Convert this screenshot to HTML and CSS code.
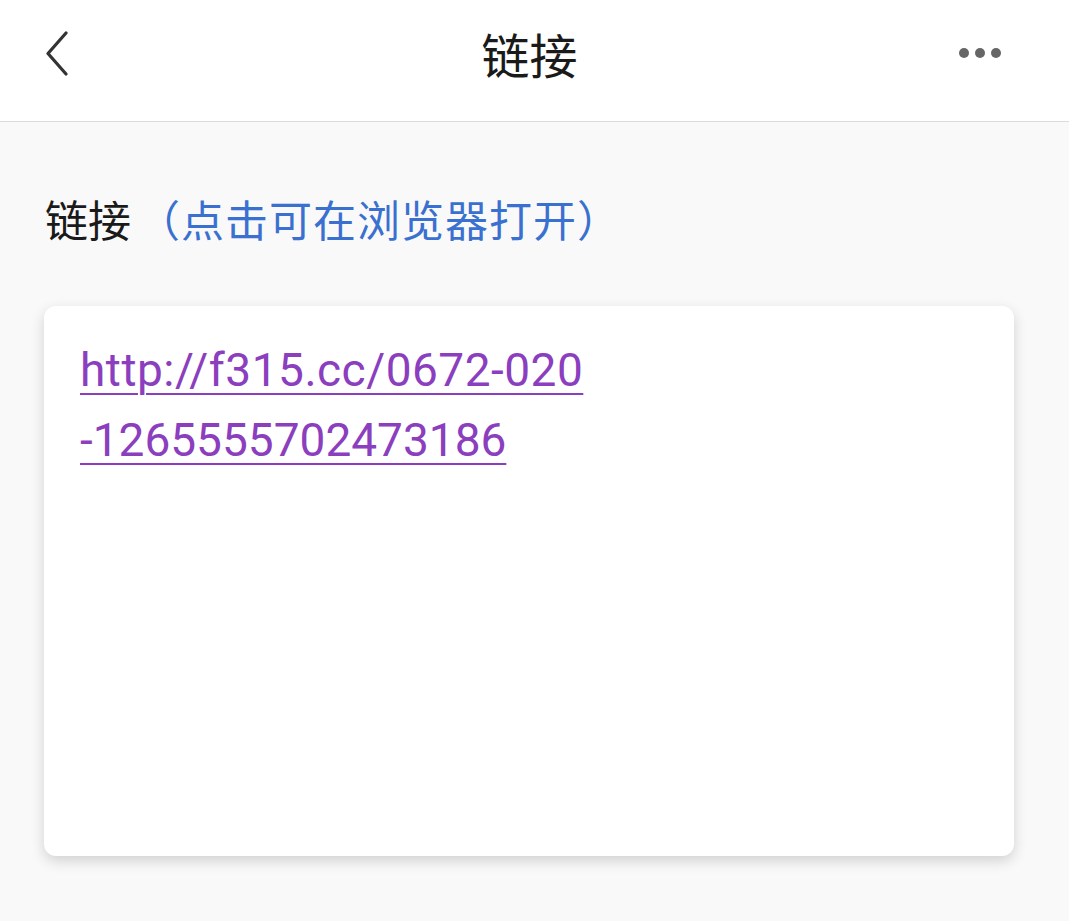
FILE: index.html
```html
<!DOCTYPE html>
<html lang="zh">
<head>
<meta charset="utf-8">
<title>链接</title>
<link rel="stylesheet" href="styles.css">
</head>
<body>
<header class="topbar">
  <div class="back">
    <svg width="24" height="46" viewBox="0 0 24 46"><path d="M21 2 L3 22.5 L21 43" fill="none" stroke="#333" stroke-width="3.2" stroke-linecap="round" stroke-linejoin="round"/></svg>
  </div>
  <h1 class="title">链接</h1>
  <div class="more"><span class="dot"></span><span class="dot"></span><span class="dot"></span></div>
</header>
<main class="content">
  <div class="label">链接<span class="hint">（点击可在浏览器打开）</span></div>
  <section class="card">
    <a class="link" href="#"><span class="l1">http://f315.cc/0672-020</span><br>-1265555702473186</a>
  </section>
</main>
</body>
</html>
```

FILE: styles.css
```css
html, body {
  margin: 0;
  padding: 0;
}
body {
  background: #f9f9f9;
  font-family: "Noto Sans CJK SC", "Noto Sans", sans-serif;
  color: #1a1a1a;
  width: 1069px;
  height: 921px;
  overflow: hidden;
}
.topbar {
  height: 105px;
  padding-bottom: 16px;
  background: #ffffff;
  border-bottom: 1px solid #dcdcdc;
  display: grid;
  grid-template-columns: 1fr auto 1fr;
  align-items: center;
}
.back {
  padding-left: 45px;
  display: flex;
  align-items: center;
  height: 46px;
  margin-top: 3px;
}
.title {
  margin: 0 10px 0 0;
  font-size: 48px;
  font-weight: 400;
  line-height: 1;
  color: #1a1a1a;
}
.more {
  justify-self: end;
  display: flex;
  gap: 6px;
  padding-right: 68px;
  margin-top: 0;
}
.dot {
  width: 10px;
  height: 10px;
  border-radius: 50%;
  background: #666666;
}
.content {
  padding: 75px 55px 0 44px;
}
.label {
  font-size: 43px;
  line-height: 43px;
  padding-left: 1px;
  color: #1a1a1a;
}
.hint {
  color: #3a70cf;
  margin-left: 6px;
  letter-spacing: 1px;
}
.card {
  margin-top: 66px;
  height: 550px;
  box-sizing: border-box;
  background: #ffffff;
  border-radius: 12px;
  box-shadow: 0 5px 14px rgba(0, 0, 0, 0.16);
  padding: 29px 36px 0 36px;
}
.link {
  font-family: Roboto, "Noto Sans", sans-serif;
  font-size: 46px;
  line-height: 70px;
  color: #8b3ebd;
  text-decoration: underline;
  text-decoration-thickness: 2px;
  text-underline-offset: 7px;
}
.l1 {
  letter-spacing: 0.5px;
}
```
